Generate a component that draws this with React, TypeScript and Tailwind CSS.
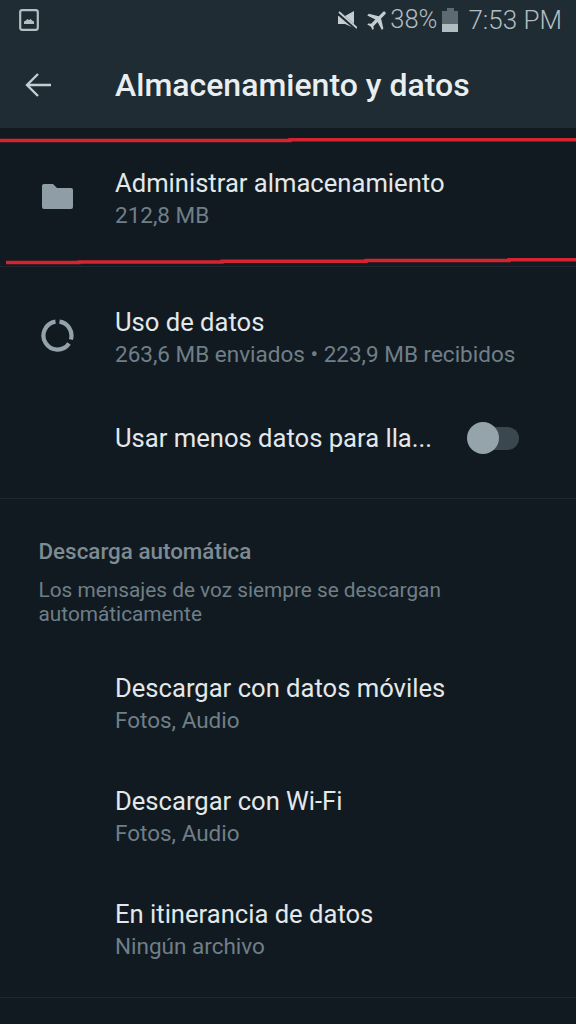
import type { ReactNode } from "react";

function Row({ icon, title, sub }: { icon?: ReactNode; title: string; sub: string }) {
  return (
    <div className="flex h-[113px] items-center">
      <div className="flex w-[115px] shrink-0 justify-center">{icon}</div>
      <div className="flex flex-col">
        <span className="text-[25.6px] leading-[32px] text-[#e3e8ea]">{title}</span>
        <span className="text-[22.5px] leading-[32px] text-[#6f7f88]">{sub}</span>
      </div>
    </div>
  );
}

export default function App() {
  return (
    <div className="relative flex h-[1024px] w-[576px] flex-col overflow-hidden bg-[#121a21] font-['Roboto',sans-serif]">
      {/* barra superior */}
      <div className="h-[128px] shrink-0 bg-[#1f2c34]">
        <div className="flex h-[40px] items-center justify-between pl-[19px] pr-[14px]">
          <svg width="20" height="22" viewBox="0 0 20 22" fill="none">
            <rect x="1.2" y="1.2" width="17.600" height="19.600" rx="2" stroke="#b4bfc4" strokeWidth="2.2" />
            <path d="M5 15v-2.500l2-1 1.200-1.500 1.800 1 1.800-1 1.200 1.500 2 1V15z" fill="#b4bfc4" />
          </svg>
          <div className="flex items-center text-[#b2bdc2]">
            <svg width="20" height="18" viewBox="0 0 20 18" className="mr-[8px]" fill="#c3cdd2">
              <path d="M1 5h7l9-5v17L8 13H1z" />
              <path d="M0 1l20 17" stroke="#1f2c34" strokeWidth="4" />
              <path d="M2 1l18 16" stroke="#c3cdd2" strokeWidth="1.800" />
            </svg>
            <svg width="26" height="26" viewBox="0 0 24 24" fill="#c3cdd2" className="mr-[-1px] rotate-45">
              <path d="M21 16v-2l-8-5V3.500C13 2.670 12.330 2 11.500 2S10 2.670 10 3.500V9l-8 5v2l8-2.500V19l-2 1.500V22l3.500-1 3.500 1v-1.500L13 19v-5.500z" />
            </svg>
            <span className="text-[25.5px] leading-none font-light">38%</span>
            <div className="ml-[5px] flex h-[24px] w-[16px] flex-col items-center">
              <div className="h-[3px] w-[7px] bg-[#5d6a71]" />
              <div className="h-[13px] w-full bg-[#5d6a71]" />
              <div className="h-[8px] w-full bg-[#b2bdc2]" />
            </div>
            <span className="ml-[10px] text-[26px] leading-none font-light">7:53 PM</span>
          </div>
        </div>
        <div className="flex h-[88px] items-start pt-[27px]">
          <div className="flex h-[36px] w-[115px] shrink-0 items-center pl-[24px]">
            <svg width="28" height="26" viewBox="0 0 28 26" fill="none" stroke="#c3cdd2" strokeWidth="2.400">
              <path d="M27 13H3M14 2L3 13l11 11" />
            </svg>
          </div>
          <span className="text-[32px] leading-[36px] font-medium text-[#e9eef0]">Almacenamiento y datos</span>
        </div>
      </div>

      <div className="border-b border-[#1f2830] pt-[14px] pb-[11px]">
        <Row
          icon={
            <svg width="31" height="25" viewBox="0 0 31 25" fill="#8e9da6" className="mb-[4px]">
              <path d="M2 0h9l4 4h14a2 2 0 0 1 2 2v17a2 2 0 0 1-2 2H2a2 2 0 0 1-2-2V2a2 2 0 0 1 2-2z" />
            </svg>
          }
          title="Administrar almacenamiento"
          sub="212,8 MB"
        />
      </div>

      <div className="border-b border-[#1f2830] pt-[14px] pb-[16px]">
        <Row
          icon={
            <svg width="33" height="33" viewBox="0 0 33 33" fill="none" stroke="#94a3ab" strokeWidth="4.200" className="mb-[4px]">
              <path d="M18.500 2.700A14 14 0 0 1 29.900 20.500" />
              <path d="M28 24.500A14 14 0 1 1 14.500 2.700" />
            </svg>
          }
          title="Uso de datos"
          sub="263,6 MB enviados • 223,9 MB recibidos"
        />
        <div className="flex h-[88px] items-center pr-[57px] pl-[115px]">
          <span className="flex-1 text-[25.6px] text-[#e3e8ea]">Usar menos datos para lla...</span>
          <div className="relative h-[23px] w-[47px] rounded-full bg-[#3b474e]">
            <div className="absolute top-[-5px] left-[-5px] h-[32px] w-[32px] rounded-full bg-[#95a3ab]" />
          </div>
        </div>
      </div>

      <div className="pr-[39px] pl-[38.500px] pt-[38px]">
        <div className="text-[22.4px] leading-[28px] font-medium text-[#7d8b93]">Descarga automática</div>
        <div className="mt-[13px] text-[20.8px] leading-[24px] text-[#6f7f88]">
          Los mensajes de voz siempre se descargan automáticamente
        </div>
      </div>

      <div className="mt-[21px] border-b border-[#1f2830] pb-[11px]">
        <Row title="Descargar con datos móviles" sub="Fotos, Audio" />
        <Row title="Descargar con Wi-Fi" sub="Fotos, Audio" />
        <Row title="En itinerancia de datos" sub="Ningún archivo" />
      </div>

      {/* marcas rojas encima de la captura */}
      <svg className="pointer-events-none absolute top-0 left-0" width="576" height="1024" fill="none" stroke="#d6232f" strokeWidth="3.500">
        <path d="M0 140.500H290V139.800H576" />
        <path d="M6 262.500H79V262H222V261.300H366V260.500H509V259.800H576" />
      </svg>
    </div>
  );
}
